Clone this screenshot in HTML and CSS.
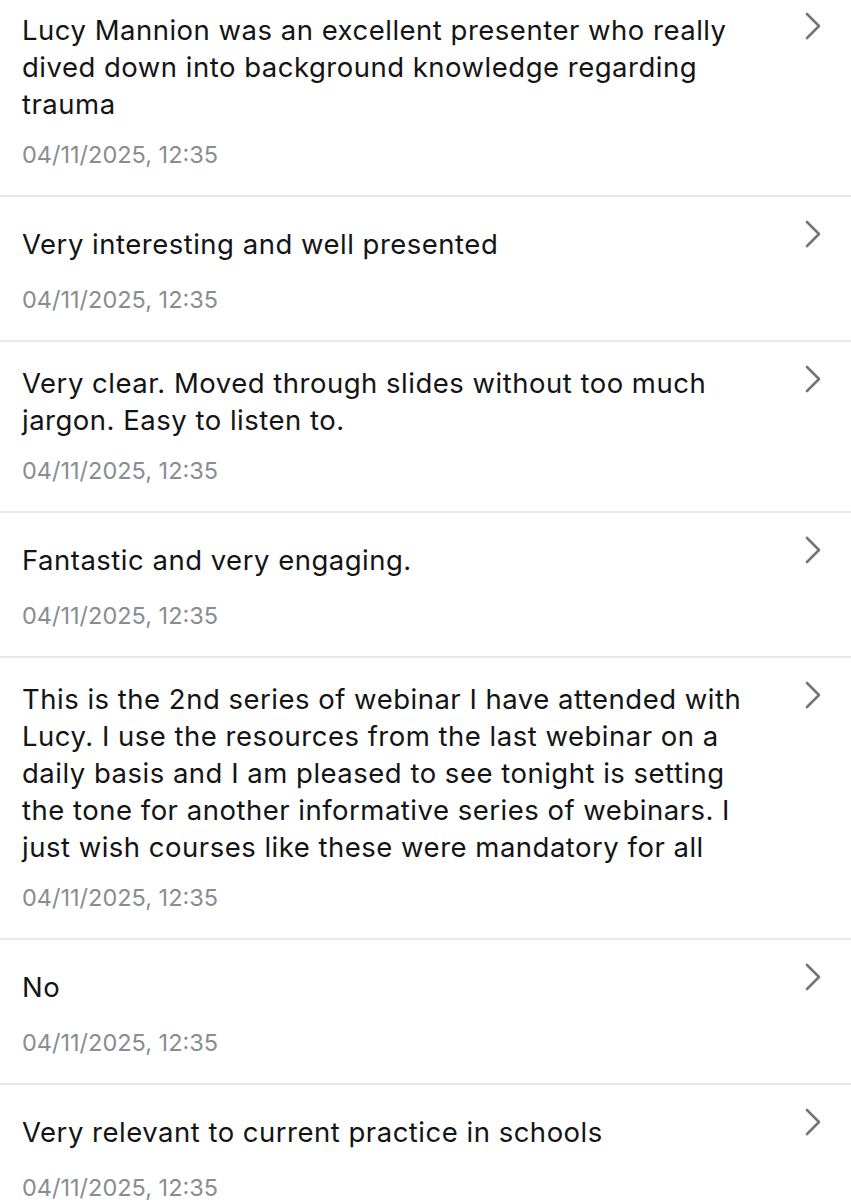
FILE: index.html
```html
<!DOCTYPE html>
<html lang="en">
<head>
<meta charset="utf-8">
<title>Responses</title>
<link rel="stylesheet" href="styles.css">
</head>
<body>
<ul class="responses">
  <li class="response">
    <div class="row">
      <div class="text">Lucy Mannion was an excellent presenter who really dived down into background knowledge regarding trauma</div>
      <svg class="chev" viewBox="0 0 16 28" width="16" height="28"><path d="M2 2 L14 14 L2 26"/></svg>
    </div>
    <div class="date">04/11/2025, 12:35</div>
  </li>
  <li class="response">
    <div class="row">
      <div class="text">Very interesting and well presented</div>
      <svg class="chev" viewBox="0 0 16 28" width="16" height="28"><path d="M2 2 L14 14 L2 26"/></svg>
    </div>
    <div class="date">04/11/2025, 12:35</div>
  </li>
  <li class="response">
    <div class="row">
      <div class="text">Very clear. Moved through slides without too much jargon. Easy to listen to.</div>
      <svg class="chev" viewBox="0 0 16 28" width="16" height="28"><path d="M2 2 L14 14 L2 26"/></svg>
    </div>
    <div class="date">04/11/2025, 12:35</div>
  </li>
  <li class="response">
    <div class="row">
      <div class="text">Fantastic and very engaging.</div>
      <svg class="chev" viewBox="0 0 16 28" width="16" height="28"><path d="M2 2 L14 14 L2 26"/></svg>
    </div>
    <div class="date">04/11/2025, 12:35</div>
  </li>
  <li class="response">
    <div class="row">
      <div class="text">This is the 2nd series of webinar I have attended with Lucy. I use the resources from the last webinar on a daily basis and I am pleased to see tonight is setting the tone for another informative series of webinars. I just wish courses like these were mandatory for all</div>
      <svg class="chev" viewBox="0 0 16 28" width="16" height="28"><path d="M2 2 L14 14 L2 26"/></svg>
    </div>
    <div class="date">04/11/2025, 12:35</div>
  </li>
  <li class="response">
    <div class="row">
      <div class="text">No</div>
      <svg class="chev" viewBox="0 0 16 28" width="16" height="28"><path d="M2 2 L14 14 L2 26"/></svg>
    </div>
    <div class="date">04/11/2025, 12:35</div>
  </li>
  <li class="response">
    <div class="row">
      <div class="text">Very relevant to current practice in schools</div>
      <svg class="chev" viewBox="0 0 16 28" width="16" height="28"><path d="M2 2 L14 14 L2 26"/></svg>
    </div>
    <div class="date">04/11/2025, 12:35</div>
  </li>
</ul>
</body>
</html>
```

FILE: styles.css
```css
html, body {
  margin: 0;
  padding: 0;
  background: #ffffff;
}
body {
  font-family: Inter, "Liberation Sans", sans-serif;
  color: #141414;
  overflow: hidden;
}
.responses {
  list-style: none;
  margin: -13px 0 0 0;
  padding: 0;
}
.response {
  border-top: 2px solid #e8e8e8;
  padding: 23px 30px 26px 22px;
}
.row {
  display: flex;
  align-items: flex-start;
}
.text {
  flex: 1;
  min-height: 48px;
  display: flex;
  align-items: center;
  font-size: 27.5px;
  letter-spacing: 0.5px;
  line-height: 37px;
  padding-right: 45px;
}
.chev {
  flex: none;
  margin-top: 0;
  fill: none;
  stroke: #6f757a;
  stroke-width: 2.6;
  stroke-linecap: round;
  stroke-linejoin: round;
}
.date {
  margin-top: 18px;
  font-size: 23.5px;
  line-height: 28px;
  color: #888d92;
}
```
